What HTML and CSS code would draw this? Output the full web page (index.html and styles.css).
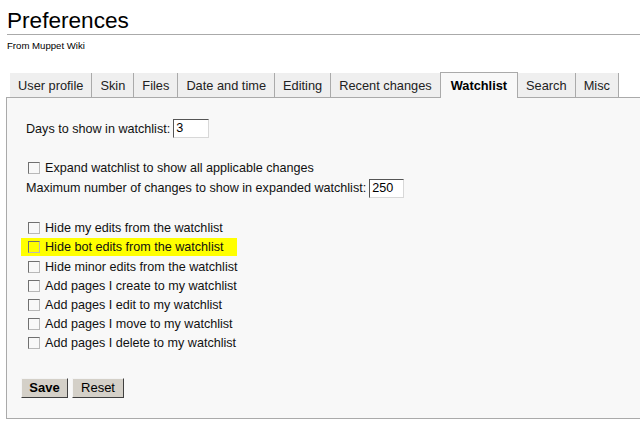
FILE: index.html
```html
<!DOCTYPE html>
<html>
<head>
<meta charset="utf-8">
<link rel="stylesheet" href="styles.css">
</head>
<body>
<h1 class="title">Preferences</h1>
<div class="sub">From Muppet Wiki</div>
<ul class="tabs">
  <li class="tab">User profile</li>
  <li class="tab">Skin</li>
  <li class="tab">Files</li>
  <li class="tab">Date and time</li>
  <li class="tab">Editing</li>
  <li class="tab before-active">Recent changes</li>
  <li class="tab active">Watchlist</li>
  <li class="tab">Search</li>
  <li class="tab">Misc</li>
</ul>
<div class="panel">
  <div class="row field">
    <span>Days to show in watchlist:</span>
    <span class="input w-days">3</span>
  </div>
  <div class="group">
    <label class="row check"><input type="checkbox" class="cb"><span>Expand watchlist to show all applicable changes</span></label>
    <div class="row field">
      <span>Maximum number of changes to show in expanded watchlist:</span>
      <span class="input w-max">250</span>
    </div>
  </div>
  <div class="group list">
    <label class="row check"><input type="checkbox" class="cb"><span>Hide my edits from the watchlist</span></label>
    <label class="row check hl"><input type="checkbox" class="cb"><span>Hide bot edits from the watchlist</span></label>
    <label class="row check"><input type="checkbox" class="cb"><span>Hide minor edits from the watchlist</span></label>
    <label class="row check"><input type="checkbox" class="cb"><span>Add pages I create to my watchlist</span></label>
    <label class="row check"><input type="checkbox" class="cb"><span>Add pages I edit to my watchlist</span></label>
    <label class="row check"><input type="checkbox" class="cb"><span>Add pages I move to my watchlist</span></label>
    <label class="row check"><input type="checkbox" class="cb"><span>Add pages I delete to my watchlist</span></label>
  </div>
  <div class="buttons">
    <button class="btn save">Save</button>
    <button class="btn reset">Reset</button>
  </div>
</div>
</body>
</html>
```
FILE: styles.css
```css
html, body {
  margin: 0;
  padding: 0;
  background: #ffffff;
  overflow: hidden;
}
body {
  font-family: "Liberation Sans", Arial, sans-serif;
  color: #111;
  padding-top: 7px;
  width: 640px;
}
.title {
  margin: 0 0 0 7px;
  font-size: 22.6px;
  font-weight: normal;
  line-height: 27px;
  border-bottom: 1px solid #aaa;
  color: #000;
}
.sub {
  margin: 5px 0 0 7px;
  font-size: 9.6px;
  line-height: 12px;
  color: #000;
}
.tabs {
  list-style: none;
  margin: 21px 0 0 10px;
  padding: 0;
  display: flex;
  height: 24px;
  position: relative;
  z-index: 1;
}
.tab {
  font-size: 12.8px;
  line-height: 22px;
  padding: 2px 8px 0 8px;
  height: 22px;
  background: #efefef;
  border-right: 1px solid #aaa;
  color: #222;
  white-space: nowrap;
}
.tab.before-active {
  border-right: none;
}
.tab.active {
  background: #f8f8f8;
  font-weight: bold;
  border: 1px solid #aaa;
  border-bottom: none;
  height: 23px;
  margin-top: -1px;
  padding: 2px 10px 0 10px;
  color: #000;
}
.panel {
  margin: 0 -20px 0 6px;
  border: 1px solid #aaa;
  background: #f8f8f8;
  padding: 20px 14px 20px 14px;
  font-size: 12.6px;
  color: #111;
}
.row {
  display: flex;
  align-items: center;
  white-space: nowrap;
}
.field {
  height: 21px;
  padding-left: 5px;
}
.input {
  display: inline-block;
  box-sizing: border-box;
  height: 19px;
  line-height: 17px;
  margin-left: 3px;
  padding-left: 2px;
  background: #fff;
  border: 1px solid;
  border-color: #555 #d8d8d8 #d8d8d8 #555;
  color: #000;
}
.w-days { width: 36px; }
.w-max { width: 35px; }
.group {
  margin-top: 19.5px;
}
.list {
  margin-top: 20px;
}
.check {
  height: 19.2px;
  padding-left: 7px;
}
.hl {
  background: #ffff00;
  width: fit-content;
  padding-right: 13px;
  height: 18px;
  margin: 0.6px 0;
}
.cb {
  -webkit-appearance: none;
  appearance: none;
  box-sizing: border-box;
  width: 12px;
  height: 12px;
  margin: 0 5px 0 0;
  border: 1px solid;
  border-color: #707070 #b8b8b8 #b8b8b8 #707070;
  background: transparent;
}
.buttons {
  display: flex;
  gap: 4px;
  margin-top: 25px;
}
.btn {
  font-family: "Liberation Sans", Arial, sans-serif;
  font-size: 13px;
  height: 20px;
  padding: 0 6px;
  background: #d4d0c8;
  border: 1px solid;
  border-color: #f4f4f4 #404040 #404040 #f4f4f4;
  color: #000;
  line-height: 18px;
}
.save {
  font-weight: bold;
  width: 47px;
}
.reset {
  width: 52px;
}
```
